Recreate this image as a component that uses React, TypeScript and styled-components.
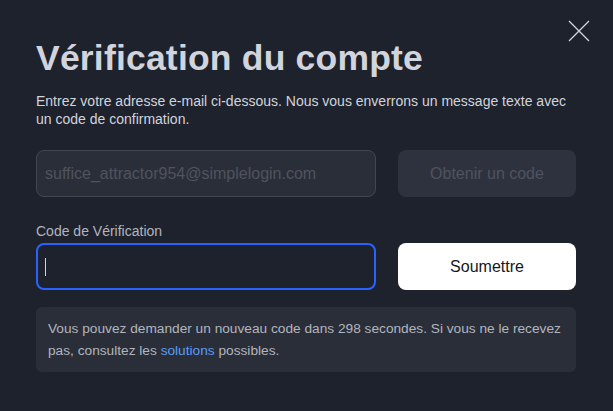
import React from "react";
import styled, { createGlobalStyle } from "styled-components";

const Global = createGlobalStyle`
  html, body { margin: 0; padding: 0; background: #1e222d; }
  * { box-sizing: border-box; }
  body { font-family: "Liberation Sans", Arial, sans-serif; }
`;

const Dialog = styled.div`
  position: relative;
  width: 613px;
  height: 411px;
  background: #1e222d;
  padding: 36px 37px 0 36px;
  display: flex;
  flex-direction: column;
`;

const Close = styled.button`
  position: absolute;
  top: 19px;
  right: 22px;
  width: 24px;
  height: 24px;
  padding: 0;
  border: 0;
  background: transparent;
  color: #d1d4dc;
  display: flex;
  align-items: center;
  justify-content: center;
`;

const Title = styled.h1`
  margin: 0;
  font-size: 35.5px;
  line-height: 44px;
  font-weight: 700;
  color: #d1d4dc;
  letter-spacing: 0.2px;
`;

const Lead = styled.p`
  margin: 12px 0 0;
  max-width: 530px;
  font-size: 14px;
  line-height: 18px;
  color: #d1d4dc;
`;

const Row = styled.div<{ $top: number }>`
  display: grid;
  grid-template-columns: 340px 178px;
  column-gap: 22px;
  margin-top: ${(p) => p.$top}px;
`;

const Field = styled.div<{ $focused?: boolean; $disabled?: boolean }>`
  height: 47px;
  border-radius: 8px;
  border: ${(p) => (p.$focused ? "2px solid #2962ff" : "1px solid #434651")};
  background: ${(p) => (p.$disabled ? "#2a2e39" : "#1e222d")};
  display: flex;
  align-items: center;
  padding: 0 ${(p) => (p.$focused ? 7 : 8)}px;
  font-size: 16px;
  color: #50535e;
`;

const Caret = styled.span`
  width: 1px;
  height: 18px;
  background: #d1d4dc;
`;

const Button = styled.button<{ $primary?: boolean }>`
  height: 47px;
  border: 0;
  border-radius: 8px;
  font-family: inherit;
  font-size: 16px;
  background: ${(p) => (p.$primary ? "#ffffff" : "#2e323e")};
  color: ${(p) => (p.$primary ? "#131722" : "#50535e")};
`;

const Label = styled.div`
  margin-top: 25px;
  font-size: 14px;
  line-height: 18px;
  color: #b2b5be;
`;

const Note = styled.div`
  margin-top: 17px;
  width: 540px;
  padding: 11px 12px 10px 12px;
  border-radius: 6px;
  background: #2a2e39;
  font-size: 13.7px;
  line-height: 22px;
  color: #b2b5be;
`;

const Link = styled.a`
  color: #5b9cf6;
  text-decoration: none;
`;

export default function App() {
  return (
    <>
      <Global />
      <Dialog>
        <Close aria-label="Fermer">
          <svg width="24" height="24" viewBox="0 0 24 24" fill="none">
            <path d="M2 2L22 22M22 2L2 22" stroke="currentColor" strokeWidth="1.3" />
          </svg>
        </Close>
        <Title>Vérification du compte</Title>
        <Lead>
          Entrez votre adresse e-mail ci-dessous. Nous vous enverrons un message texte avec un code de
          confirmation.
        </Lead>
        <Row $top={22}>
          <Field $disabled>suffice_attractor954@simplelogin.com</Field>
          <Button disabled>Obtenir un code</Button>
        </Row>
        <Label>Code de Vérification</Label>
        <Row $top={3}>
          <Field $focused>
            <Caret />
          </Field>
          <Button $primary>Soumettre</Button>
        </Row>
        <Note>
          Vous pouvez demander un nouveau code dans 298 secondes. Si vous ne le recevez pas, consultez les{" "}
          <Link href="#">solutions</Link> possibles.
        </Note>
      </Dialog>
    </>
  );
}
